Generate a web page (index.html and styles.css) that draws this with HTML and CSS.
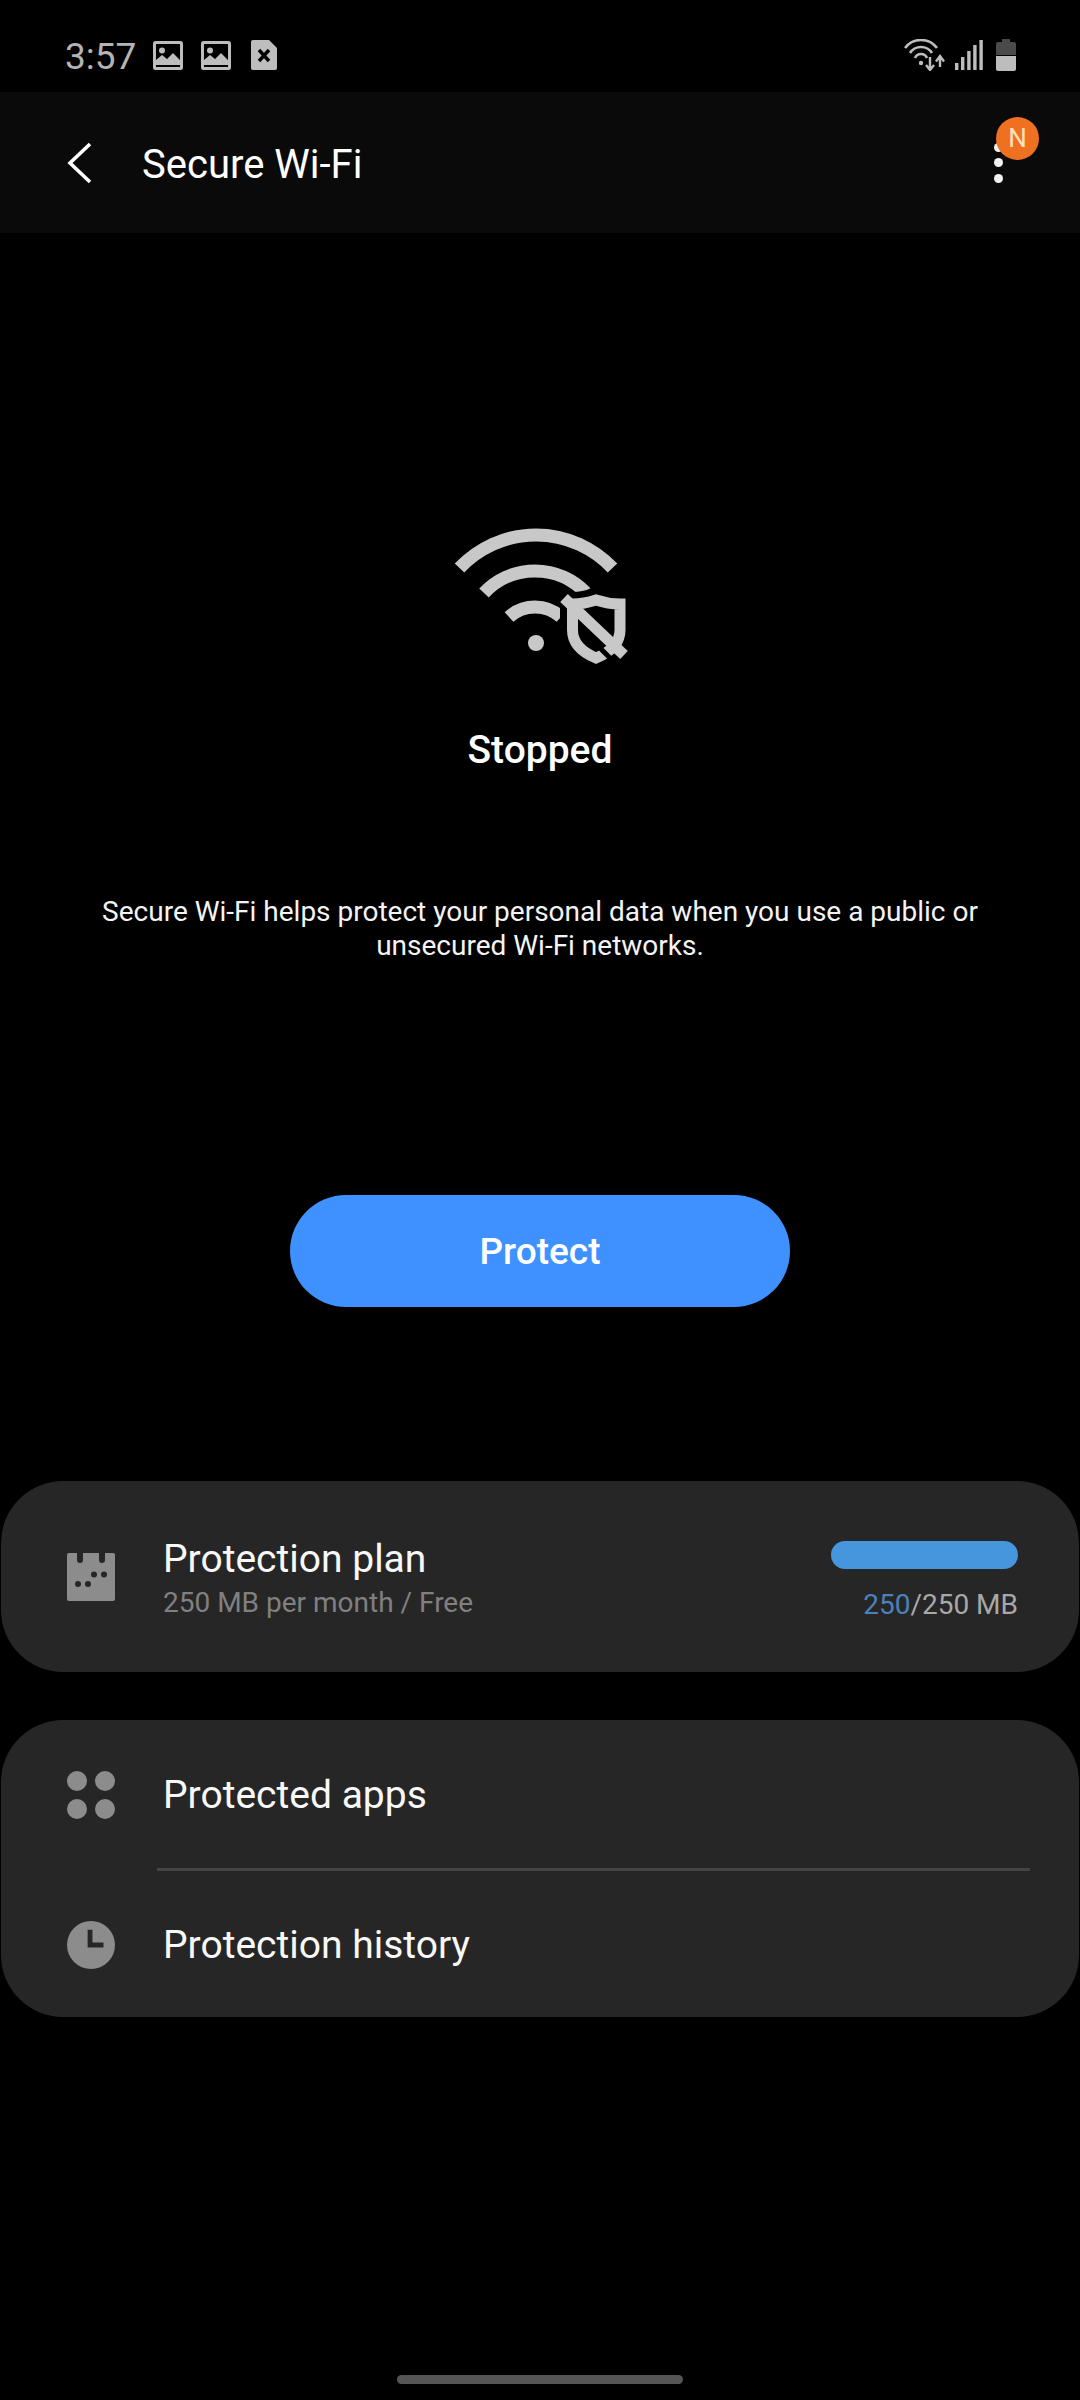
FILE: index.html
```html
<!DOCTYPE html>
<html lang="en">
<head>
  <meta charset="UTF-8" />
  <title>Secure Wi-Fi</title>
  <link rel="stylesheet" href="styles.css">
</head>
<body>
  <div class="status-bar">
    <span class="clock">3:57</span>
    <svg class="st-img" viewBox="0 0 30 29"><rect x="1.5" y="1.5" width="27" height="26" rx="1" fill="#000" stroke="#bdbdbd" stroke-width="3"/><circle cx="9" cy="9.5" r="3" fill="#bdbdbd"/><path d="M3 24V19L9 14L14 18L20 12L27 19V24Z" fill="#bdbdbd"/></svg>
    <svg class="st-img" viewBox="0 0 30 29"><rect x="1.5" y="1.5" width="27" height="26" rx="1" fill="#000" stroke="#bdbdbd" stroke-width="3"/><circle cx="9" cy="9.5" r="3" fill="#bdbdbd"/><path d="M3 24V19L9 14L14 18L20 12L27 19V24Z" fill="#bdbdbd"/></svg>
    <svg class="st-doc" viewBox="0 0 26 30"><path d="M2 0H18L26 8V28Q26 30 24 30H2Q0 30 0 28V2Q0 0 2 0Z" fill="#bdbdbd"/><path d="M8 10L18 21M18 10L8 21" stroke="#000" stroke-width="3.4"/></svg>
    <div class="status-right">
      <svg class="st-wifi" viewBox="0 0 42 32"><g fill="none" stroke="#bdbdbd" stroke-width="2.6"><path d="M1 9A20 20 0 0 1 33 9"/><path d="M6 14A13 13 0 0 1 28 14"/><path d="M11 19A6.500 6.500 0 0 1 23 19"/></g><circle cx="17" cy="24" r="2.2" fill="#bdbdbd"/><path d="M26 18V30M22 26L26 31L30 26M36 28V18M32 22.500L36 17L40 22.500" fill="none" stroke="#bdbdbd" stroke-width="2.4"/></svg>
      <svg class="st-signal" viewBox="0 0 28 30"><g fill="#bdbdbd"><rect x="0" y="23" width="3.4" height="7"/><rect x="6" y="17" width="3.4" height="13"/><rect x="12.2" y="11" width="3.4" height="19"/><rect x="18.2" y="5" width="3.4" height="25"/><rect x="24.4" y="0" width="3.4" height="30"/></g></svg>
      <svg class="st-batt" viewBox="0 0 20 32"><path d="M6 0H14V3H18Q20 3 20 5V16H0V5Q0 3 2 3H6Z" fill="#4a4a4a"/><path d="M0 17H20V30Q20 32 18 32H2Q0 32 0 30Z" fill="#bdbdbd"/></svg>
    </div>
  </div>

  <header class="app-bar">
    <svg class="back" viewBox="0 0 26 42"><path d="M23 2L3 21L23 40" fill="none" stroke="#fff" stroke-width="3.6"/></svg>
    <h1 class="title">Secure Wi-Fi</h1>
    <div class="more">
      <i></i><i></i><i></i>
      <span class="badge">N</span>
    </div>
  </header>

  <section class="hero">
    <svg class="hero-icon" viewBox="0 0 240 180">
      <g fill="none" stroke="#c8c8c8" stroke-width="13">
        <path d="M39.5 68A105 105 0 0 1 192.5 68"/>
        <path d="M64 93A70 70 0 0 1 166 93"/>
        <path d="M89 117A38.8 38.8 0 0 1 141 117"/>
      </g>
      <circle cx="116" cy="143" r="8" fill="#c8c8c8"/>
      <path d="M152 104C163 104 170 102 176 99C182 102 190 104 200 104V130C200 145 188 153 176 159C164 153 152 145 152 130Z" fill="#000" stroke="#000" stroke-width="24"/>
      <path d="M152.500 104C163 104 170 102 176 100C182 102 190 104 200 104V130C200 145 188 153 176 158C164 153 152.500 145 152.500 130Z" fill="#000" stroke="#c8c8c8" stroke-width="11"/>
      <path d="M172 140L194 162" stroke="#000" stroke-width="5"/>
      <path d="M144 98L204 155" stroke="#c8c8c8" stroke-width="11"/>
    </svg>
    <h2 class="state">Stopped</h2>
    <p class="desc">Secure Wi-Fi helps protect your personal data when you use a public or unsecured Wi-Fi networks.</p>
    <button type="button" class="btn-protect">Protect</button>
  </section>

  <section class="card card-plan">
    <svg class="row-icon" viewBox="0 0 48 48"><path d="M2 0H10V7Q10 10 13 10T16 7V0H32V7Q32 10 35 10T38 7V0H46Q48 0 48 2V46Q48 48 46 48H2Q0 48 0 46V2Q0 0 2 0Z" fill="#8c8c8c"/><g fill="#262626"><circle cx="11" cy="31" r="3"/><circle cx="21" cy="31" r="3"/><circle cx="27" cy="21.500" r="3"/><circle cx="37" cy="21.500" r="3"/></g></svg>
    <div class="plan-text">
      <div class="row-title">Protection plan</div>
      <div class="plan-sub">250 MB per month / Free</div>
    </div>
    <div class="usage">
      <div class="usage-bar"></div>
      <div class="usage-label"><span class="used">250</span>/250 MB</div>
    </div>
  </section>

  <section class="card card-list">
    <div class="row">
      <svg class="row-icon" viewBox="0 0 48 48"><g fill="#8c8c8c"><circle cx="10" cy="10" r="10"/><circle cx="38" cy="10" r="10"/><circle cx="10" cy="38" r="10"/><circle cx="38" cy="38" r="10"/></g></svg>
      <div class="row-title">Protected apps</div>
    </div>
    <div class="divider"></div>
    <div class="row">
      <svg class="row-icon" viewBox="0 0 50 50"><circle cx="25" cy="25" r="25" fill="#8c8c8c"/><path d="M24 9V25H38" fill="none" stroke="#262626" stroke-width="5"/></svg>
      <div class="row-title">Protection history</div>
    </div>
  </section>

  <div class="home-bar"></div>
</body>
</html>
```
FILE: styles.css
```css
* { box-sizing: border-box; }
html, body { margin: 0; padding: 0; }
body {
  width: 1080px;
  height: 2400px;
  background: #000;
  color: #fff;
  font-family: Roboto, "Liberation Sans", sans-serif;
  overflow: hidden;
}
svg { display: block; flex: none; }

.status-bar {
  height: 92px;
  display: flex;
  align-items: center;
  padding: 22px 64px 0 65px;
}
.clock { font-size: 37px; color: #b4b4b4; width: 88px; line-height: 1; margin-top: -1px; }
.st-img { width: 30px; height: 29px; margin-right: 18px; margin-top: -4px; }
.st-doc { width: 26px; height: 30px; margin-left: 2px; margin-top: -4px; }
.status-right { margin-left: auto; display: flex; align-items: center; margin-top: -4px; }
.st-wifi { width: 42px; height: 32px; margin-right: 9px; }
.st-signal { width: 28px; height: 30px; margin-right: 13px; }
.st-batt { width: 20px; height: 32px; }

.app-bar {
  height: 141px;
  background: #0a0a0a;
  display: flex;
  align-items: center;
  padding-left: 67px;
  position: relative;
}
.back { width: 26px; height: 42px; }
.title { margin: 3px 0 0 49px; font-size: 40px; font-weight: 400; }
.more {
  margin-left: auto;
  margin-right: 77px;
  display: flex;
  flex-direction: column;
  gap: 6.500px;
  position: relative;
}
.more i { display: block; width: 9px; height: 9px; border-radius: 50%; background: #f2f2f2; }
.badge {
  position: absolute;
  left: 2px;
  top: -26px;
  width: 43px;
  height: 43px;
  border-radius: 50%;
  background: #ee7020;
  color: #ffe2bd;
  font-size: 26px;
  line-height: 43px;
  text-align: center;
}

.hero {
  padding-top: 267px;
  display: flex;
  flex-direction: column;
  align-items: center;
  height: 1248px;
}
.hero-icon { width: 240px; height: 180px; }
.state { margin: 48px 0 0; font-size: 39px; font-weight: 500; line-height: 44px; }
.desc {
  margin: 123px 0 0;
  width: 900px;
  text-align: center;
  font-size: 28px;
  line-height: 33.500px;
  color: #f4f4f4;
}
.btn-protect {
  margin-top: 233px;
  width: 500px;
  height: 112px;
  border: none;
  border-radius: 56px;
  background: #3e91ff;
  color: #fff;
  font-family: inherit;
  font-size: 37px;
  font-weight: 500;
}

.card {
  background: #262626;
  border-radius: 62px;
  margin: 0 1px;
}
.card-plan {
  height: 191px;
  display: flex;
  align-items: center;
  padding: 0 61px 0 66px;
}
.card-list { margin-top: 48px; height: 297px; padding-top: 1px; }
.row-icon { width: 48px; height: 48px; margin-right: 48px; }
.row-title { font-size: 39px; line-height: 44px; color: #f8f8f8; }
.plan-text { margin-top: 4px; }
.plan-sub { font-size: 28px; line-height: 34px; color: #808080; margin-top: 5px; }
.usage { margin-left: auto; display: flex; flex-direction: column; align-items: flex-end; margin-top: 10px; }
.usage-bar { width: 187px; height: 28px; border-radius: 14px; background: #4596dc; }
.usage-label { font-size: 28px; line-height: 34px; margin-top: 19px; color: #a8a8a8; }
.used { color: #4b82b8; }

.row { height: 147px; display: flex; align-items: center; padding-left: 66px; }
.divider { height: 3px; margin: 0 49px 0 156px; background: #444; }

.home-bar {
  width: 286px;
  height: 9px;
  border-radius: 5px;
  background: #555;
  margin: 358px auto 0;
}
```
